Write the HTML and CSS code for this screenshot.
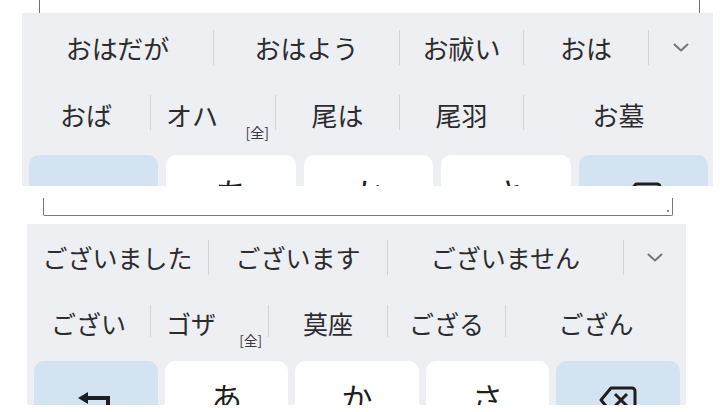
FILE: index.html
```html
<!DOCTYPE html>
<html lang="ja">
<head>
<meta charset="utf-8">
<title>候補</title>
<link rel="stylesheet" href="styles.css">
</head>
<body>
<div class="shot shot1">
  <div class="field field1"></div>
  <div class="kb kb1">
    <div class="row t-r1">
      <div class="c w191">おはだが</div>
      <div class="c w186">おはよう</div>
      <div class="c w124">お祓い</div>
      <div class="c w125">おは</div>
      <div class="c w65 more"><svg class="chev" viewBox="0 0 16 9"><path d="M1.5 1.5 L8 7.5 L14.5 1.5"/></svg></div>
    </div>
    <div class="row t-r2">
      <div class="c w128">おば</div>
      <div class="c w125 ann"><span>オハ</span><small>[全]</small></div>
      <div class="c w124">尾は</div>
      <div class="c w124">尾羽</div>
      <div class="c w190">お墓</div>
    </div>
    <div class="keys">
      <div class="key fn"><svg class="ico-undo" viewBox="0 0 40 24"><path d="M2 8 L12 2 L12 6 L34 6 L34 22 L30 22 L30 10 L12 10 L12 14 Z"/></svg></div>
      <div class="key">あ</div>
      <div class="key">か</div>
      <div class="key">さ</div>
      <div class="key fn"><svg class="ico-bs" viewBox="0 0 40 30"><path d="M13 3 H34 a3 3 0 0 1 3 3 V24 a3 3 0 0 1 -3 3 H13 L3 15 Z"/><path d="M17 9 L29 21 M29 9 L17 21"/></svg></div>
    </div>
  </div>
</div>
<div class="shot shot2">
  <div class="field field2"><span class="grip"></span></div>
  <div class="kb kb2">
    <div class="row b-r1">
      <div class="c w181">ございました</div>
      <div class="c w179">ございます</div>
      <div class="c w236">ございません</div>
      <div class="c w63 more"><svg class="chev" viewBox="0 0 16 9"><path d="M1.5 1.5 L8 7.5 L14.5 1.5"/></svg></div>
    </div>
    <div class="row b-r2">
      <div class="c w123">ござい</div>
      <div class="c w118 ann"><span>ゴザ</span><small>[全]</small></div>
      <div class="c w119">莫座</div>
      <div class="c w118">ござる</div>
      <div class="c w181">ござん</div>
    </div>
    <div class="keys">
      <div class="key fn"><svg class="ico-undo" viewBox="0 0 40 24"><path d="M2 8 L12 2 L12 6 L34 6 L34 22 L30 22 L30 10 L12 10 L12 14 Z"/></svg></div>
      <div class="key">あ</div>
      <div class="key">か</div>
      <div class="key">さ</div>
      <div class="key fn"><svg class="ico-bs" viewBox="0 0 40 30"><path d="M13 3 H34 a3 3 0 0 1 3 3 V24 a3 3 0 0 1 -3 3 H13 L3 15 Z"/><path d="M17 9 L29 21 M29 9 L17 21"/></svg></div>
    </div>
  </div>
</div>
</body>
</html>
```
FILE: styles.css
```css
html, body {
  margin: 0;
  padding: 0;
  background: #ffffff;
}
body {
  width: 720px;
  height: 412px;
  overflow: hidden;
  font-family: "Noto Sans CJK JP", "Noto Sans", sans-serif;
  color: #2c2c2e;
}
.shot {
  overflow: hidden;
  background: #ffffff;
}
.shot1 { height: 186px; }
.shot2 { height: 219px; }

.field { box-sizing: border-box; }
.field1 {
  margin-left: 39px;
  width: 661px;
  height: 13px;
  border-left: 1px solid #6f6f6f;
  border-right: 1px solid #6f6f6f;
}
.field2 {
  position: relative;
  margin: 12px 0 8px 43px;
  width: 630px;
  height: 18px;
  border: 1px solid #777777;
  border-top: none;
  border-radius: 0 0 2px 2px;
}
.grip {
  position: absolute;
  right: 3px;
  bottom: 3px;
  width: 2px;
  height: 2px;
  background: #888;
}

.kb {
  background: #eeeff2;
  box-sizing: border-box;
}
.kb1 {
  margin-left: 22px;
  width: 691px;
  padding-top: 17px;
  height: 240px;
  font-size: 26px;
}
.kb2 {
  margin-left: 27px;
  width: 659px;
  padding-top: 16px;
  height: 240px;
  font-size: 25px;
}

.row {
  display: flex;
  align-items: stretch;
}
.t-r1 { height: 35px; margin-bottom: 30px; }
.t-r2 { height: 35px; margin-bottom: 25px; }
.b-r1 { height: 35px; margin-bottom: 30px; }
.b-r2 { height: 32px; margin-bottom: 24px; }

.c {
  box-sizing: border-box;
  display: flex;
  align-items: center;
  justify-content: center;
  white-space: nowrap;
  line-height: 1;
  flex: none;
}
.c + .c { border-left: 1px solid #d3d4d8; }
.t-r2 .c, .b-r2 .c { padding-top: 4px; }

.w191 { width: 191px; }
.w186 { width: 186px; }
.w124 { width: 124px; }
.w125 { width: 125px; }
.w65  { width: 65px; }
.w128 { width: 128px; }
.w190 { width: 190px; }
.w181 { width: 181px; }
.w179 { width: 179px; }
.w236 { width: 236px; }
.w63  { width: 63px; }
.w123 { width: 123px; }
.w118 { width: 118px; }
.w119 { width: 119px; }

.ann {
  justify-content: space-between;
  padding-left: 15px;
  padding-right: 6px;
}
.ann small {
  align-self: flex-end;
  font-size: 14px;
  color: #3a3a3c;
  margin-bottom: -9px;
}
.b-r2 .ann small { font-size: 13.5px; margin-bottom: -10px; }

.chev {
  width: 16px;
  height: 9px;
  fill: none;
  stroke: #76777b;
  stroke-width: 2;
  stroke-linecap: round;
  stroke-linejoin: round;
}

.keys {
  display: grid;
  grid-template-columns: repeat(5, 1fr);
}
.kb1 .keys { gap: 8px; padding: 0 5px 0 7px; }
.kb2 .keys { gap: 7px; padding: 0 6px 0 7px; }

.key {
  background: #ffffff;
  border-radius: 10px;
  height: 70px;
  display: flex;
  justify-content: center;
  align-items: flex-start;
  line-height: 1;
  color: #1f1f21;
}
.kb1 .key { font-size: 34px; padding-top: 22px; }
.kb2 .key { font-size: 31px; padding-top: 20px; }
.key.fn { background: #d3e3f1; }

.ico-undo {
  width: 40px;
  height: 24px;
  fill: #1f1f21;
  margin-top: 9px;
}
.ico-bs {
  width: 40px;
  height: 30px;
  fill: none;
  stroke: #1f1f21;
  stroke-width: 3;
  stroke-linejoin: round;
  margin-top: 4px;
}
```
